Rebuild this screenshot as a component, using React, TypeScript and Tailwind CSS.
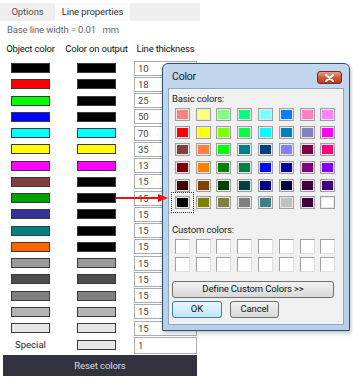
import React from "react";

const rows = [
  { obj: "#000000", out: "#000000", w: "10" },
  { obj: "#ff0000", out: "#000000", w: "18" },
  { obj: "#00ff00", out: "#000000", w: "25" },
  { obj: "#0000ff", out: "#000000", w: "50" },
  { obj: "#00ffff", out: "#00ffff", w: "70" },
  { obj: "#ffff00", out: "#ffff00", w: "35" },
  { obj: "#ff00ff", out: "#ff00ff", w: "13" },
  { obj: "#804040", out: "#000000", w: "15" },
  { obj: "#00a000", out: "#000000", w: "15" },
  { obj: "#333399", out: "#000000", w: "15" },
  { obj: "#008080", out: "#000000", w: "15" },
  { obj: "#ff6600", out: "#000000", w: "15" },
  { obj: "#999999", out: "#999999", w: "15" },
  { obj: "#4d4d4d", out: "#4d4d4d", w: "15" },
  { obj: "#808080", out: "#808080", w: "15" },
  { obj: "#b3b3b3", out: "#b3b3b3", w: "15" },
  { obj: "#e6e6e6", out: "#e6e6e6", w: "15" },
];

const basic = [
  ["#ff8080", "#ffff80", "#80ff80", "#00ff80", "#80ffff", "#0080ff", "#ff80c0", "#ff80ff"],
  ["#ff0000", "#ffff00", "#80ff00", "#00ff40", "#00ffff", "#0080c0", "#8080c0", "#ff00ff"],
  ["#804040", "#ff8040", "#00ff00", "#008080", "#004080", "#8080ff", "#800040", "#ff0080"],
  ["#800000", "#ff8000", "#008000", "#008040", "#0000ff", "#0000a0", "#800080", "#8000ff"],
  ["#400000", "#804000", "#004000", "#004040", "#000080", "#000040", "#400040", "#400080"],
  ["#000000", "#808000", "#808040", "#808080", "#408080", "#c0c0c0", "#400040", "#ffffff"],
];

const Swatch = ({ color }: { color: string }) => (
  <div
    className="w-[39px] h-[10px] border border-[#3a3a3a]"
    style={{ backgroundColor: color }}
  />
);

const ColorDialog = () => (
  <div className="absolute left-[162px] top-[63px] w-[188px] h-[268px] rounded-t-[6px] border border-[#2f4f6f] bg-gradient-to-b from-[#c2d7ee] to-[#b7cfe9] shadow-[1px_2px_4px_rgba(0,0,0,0.25)] flex flex-col">
    {/* title bar */}
    <div className="h-[24px] flex items-center justify-between pl-[9px] pr-[7px]">
      <span className="text-[10.5px] tracking-[-0.2px] text-[#1b1b1b] pt-[1px]">Color</span>
      <div className="w-[25px] h-[13px] mt-[3px] rounded-[3px] border border-[#7a2a20] bg-gradient-to-b from-[#e8a08c] via-[#cf5a40] to-[#b53a22] flex items-center justify-center">
        <svg width="9" height="8" viewBox="0 0 9 8">
          <path d="M1 1 L8 7 M8 1 L1 7" stroke="#ffffff" strokeWidth="2" strokeLinecap="round" />
        </svg>
      </div>
    </div>
    {/* client area */}
    <div className="mx-[5px] mb-[5px] flex-1 bg-[#f0f0f0] border border-[#8ea8c4] flex flex-col px-[3px]">
      <div className="text-[9.5px] tracking-[-0.15px] text-[#222] mt-[3px] leading-[14px]">Basic colors:</div>
      <div className="grid grid-cols-[repeat(8,20.8px)] auto-rows-[17.6px]">
        {basic.flat().map((c, i) => (
          <div key={i} className="flex items-center justify-center">
            <div
              className={
                i === 40
                  ? "p-[2px] outline outline-1 outline-dotted outline-[#333] border border-white"
                  : ""
              }
            >
              <div
                className="w-[15px] h-[13px] border border-[#a0a0a0] shadow-[inset_0_0_0_1px_#e8e8e8]"
                style={{ backgroundColor: c }}
              />
            </div>
          </div>
        ))}
      </div>
      <div className="text-[9.5px] tracking-[-0.15px] text-[#222] mt-[11px] leading-[14px]">Custom colors:</div>
      <div className="grid grid-cols-[repeat(8,20.8px)] auto-rows-[18px] mt-[1px]">
        {Array.from({ length: 16 }).map((_, i) => (
          <div key={i} className="flex items-center justify-center">
            <div className="w-[15px] h-[15px] bg-white border border-[#a0a0a0] border-r-[#e0e0e0] border-b-[#e0e0e0]" />
          </div>
        ))}
      </div>
      <button className="mt-[7px] h-[17px] w-[162px] rounded-[3px] border border-[#707070] bg-gradient-to-b from-[#f2f2f2] to-[#d8d8d8] text-[9.5px] tracking-[-0.15px] text-[#111] leading-none">
        Define Custom Colors &gt;&gt;
      </button>
      <div className="flex gap-[8px] mt-[3px]">
        <button className="h-[17px] w-[50px] rounded-[3px] border border-[#3c7fb1] bg-gradient-to-b from-[#eaf6fd] to-[#bee6fd] text-[9.5px] text-[#111] leading-none">
          OK
        </button>
        <button className="h-[17px] w-[49px] rounded-[3px] border border-[#707070] bg-gradient-to-b from-[#f2f2f2] to-[#d8d8d8] text-[9.5px] tracking-[-0.15px] text-[#111] leading-none">
          Cancel
        </button>
      </div>
    </div>
  </div>
);

export default function App() {
  return (
    <div
      className="relative w-[353px] h-[381px] bg-white overflow-hidden"
      style={{ fontFamily: 'Roboto, "Liberation Sans", sans-serif' }}
    >
      <div className="w-[200px]">
        {/* tabs */}
        <div className="mt-[3px] h-[18px] bg-[#eeeeee] flex text-[9.5px] tracking-[-0.1px] whitespace-nowrap">
          <div className="w-[55px] flex items-center justify-center text-[#555]">Options</div>
          <div className="w-[75px] flex items-center justify-center bg-[#fafafa] text-[#333]">
            Line properties
          </div>
        </div>
        <div className="h-[19px] flex items-center pl-[7px] text-[9.5px] tracking-[-0.15px] text-[#666] whitespace-nowrap">
          Base line width = 0.01&nbsp;&nbsp;&nbsp;mm
        </div>
        <div className="h-[18px] flex items-center text-[9.5px] tracking-[-0.2px] text-[#111] whitespace-nowrap">
          <div className="w-[61px] text-center">Object color</div>
          <div className="w-[71px] text-center">Color on output</div>
          <div className="ml-[2px] w-[63px] text-center">Line thickness</div>
        </div>
        <div className="mt-[2px]">
          {rows.map((r, i) => (
            <div key={i} className="h-[16.25px] flex items-center">
              <div className="w-[61px] flex justify-center">
                <Swatch color={r.obj} />
              </div>
              <div className="w-[71px] flex justify-center">
                <Swatch color={r.out} />
              </div>
              <div className="ml-[2px] w-[63px] h-[15px] border border-[#abadb3] bg-white text-[9.5px] text-[#444] pl-[3px] leading-[13px]">
                {r.w}
              </div>
            </div>
          ))}
          <div className="h-[18px] flex items-center">
            <div className="w-[61px] text-center text-[9.5px] text-[#222]">Special</div>
            <div className="w-[71px] flex justify-center">
              <Swatch color="#e6e6e6" />
            </div>
            <div className="ml-[2px] w-[63px] h-[17px] border border-[#abadb3] bg-white text-[9.5px] text-[#444] pl-[3px] leading-[15px]">
              1
            </div>
          </div>
        </div>
        <div className="mt-[1px] ml-[3px] w-[194px] h-[21px] bg-[#33323f] flex items-center justify-center text-[9.5px] tracking-[-0.1px] text-[#dcdce0]">
          Reset colors
        </div>
      </div>

      <ColorDialog />

      {/* red arrow */}
      <svg className="absolute left-[116px] top-[193px]" width="54" height="10" viewBox="0 0 54 10">
        <line x1="0" y1="5" x2="44" y2="5" stroke="#ee1111" strokeWidth="2" />
        <path d="M42 1 L52 5 L42 9 Z" fill="#ee1111" />
      </svg>
    </div>
  );
}
